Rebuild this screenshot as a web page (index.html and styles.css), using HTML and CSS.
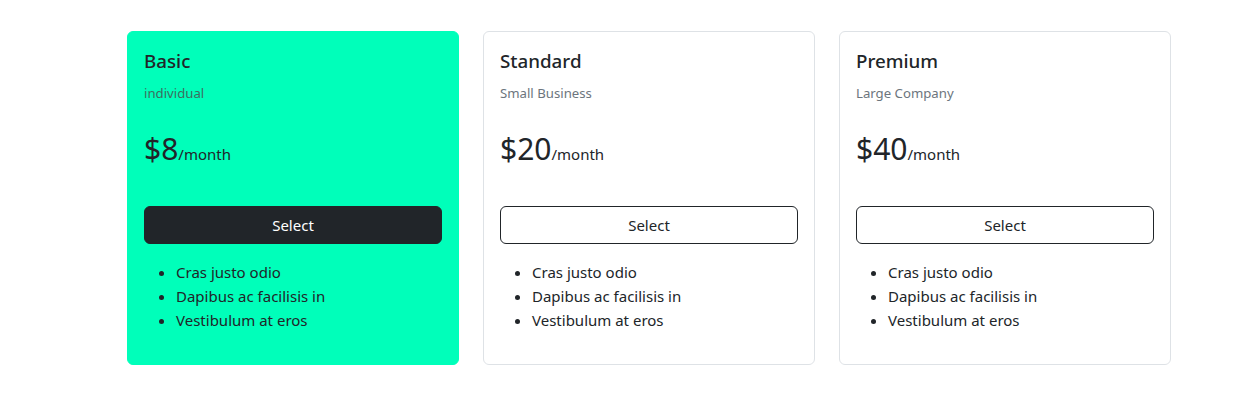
FILE: index.html
```html
<!DOCTYPE html>
<html lang="en">
<head>
<meta charset="utf-8">
<title>Pricing</title>
<link rel="stylesheet" href="styles.css">
</head>
<body>
<main class="pricing">
  <section class="card card-active">
    <h5 class="card-title">Basic</h5>
    <h6 class="card-subtitle">individual</h6>
    <div class="price"><span class="amount">$8</span><span class="period">/month</span></div>
    <button class="btn btn-dark">Select</button>
    <ul class="features">
      <li>Cras justo odio</li>
      <li>Dapibus ac facilisis in</li>
      <li>Vestibulum at eros</li>
    </ul>
  </section>
  <section class="card">
    <h5 class="card-title">Standard</h5>
    <h6 class="card-subtitle">Small Business</h6>
    <div class="price"><span class="amount">$20</span><span class="period">/month</span></div>
    <button class="btn btn-outline">Select</button>
    <ul class="features">
      <li>Cras justo odio</li>
      <li>Dapibus ac facilisis in</li>
      <li>Vestibulum at eros</li>
    </ul>
  </section>
  <section class="card">
    <h5 class="card-title">Premium</h5>
    <h6 class="card-subtitle">Large Company</h6>
    <div class="price"><span class="amount">$40</span><span class="period">/month</span></div>
    <button class="btn btn-outline">Select</button>
    <ul class="features">
      <li>Cras justo odio</li>
      <li>Dapibus ac facilisis in</li>
      <li>Vestibulum at eros</li>
    </ul>
  </section>
</main>
</body>
</html>
```
FILE: styles.css
```css
* { box-sizing: border-box; }
html, body { margin: 0; background: #fff; }
body {
  font-family: "Noto Sans", "Open Sans", sans-serif;
  font-size: 15px;
  line-height: 24px;
  color: #212529;
}
.pricing {
  display: flex;
  gap: 24px;
  width: 1044px;
  margin: 31px 0 0 127px;
}
.card {
  flex: 1 1 0;
  border: 1px solid #dee2e6;
  border-radius: 6px;
  padding: 17px 16px 16px;
  background: #fff;
  display: flex;
  flex-direction: column;
}
.card-active {
  background: #00ffba;
  border-color: #00ffba;
}
.card-title {
  margin: 0 0 8px;
  font-size: 18.75px;
  font-weight: 500;
  line-height: 24px;
}
.card-subtitle {
  margin: 4px 0 0;
  font-size: 13.2px;
  font-weight: 400;
  line-height: 16.8px;
  color: #6c757d;
}
.card-active .card-subtitle { color: #3d6e5f; }
.price {
  margin-top: 28px;
  font-size: 15px;
  line-height: 1.2;
}
.amount { font-size: 30px; font-weight: 400; line-height: 38.4px; }
.period { font-size: 15px; line-height: 18px; }
.btn {
  margin-top: 38px;
  height: 38px;
  width: 100%;
  border-radius: 6px;
  font-family: inherit;
  font-size: 15px;
  line-height: 24px;
  cursor: pointer;
}
.btn-dark {
  background: #212529;
  border: 1px solid #212529;
  color: #fff;
}
.btn-outline {
  background: transparent;
  border: 1px solid #212529;
  color: #212529;
}
.features {
  margin: 16px 0 16px;
  padding-left: 32px;
}
.features li { line-height: 24px; }
```
